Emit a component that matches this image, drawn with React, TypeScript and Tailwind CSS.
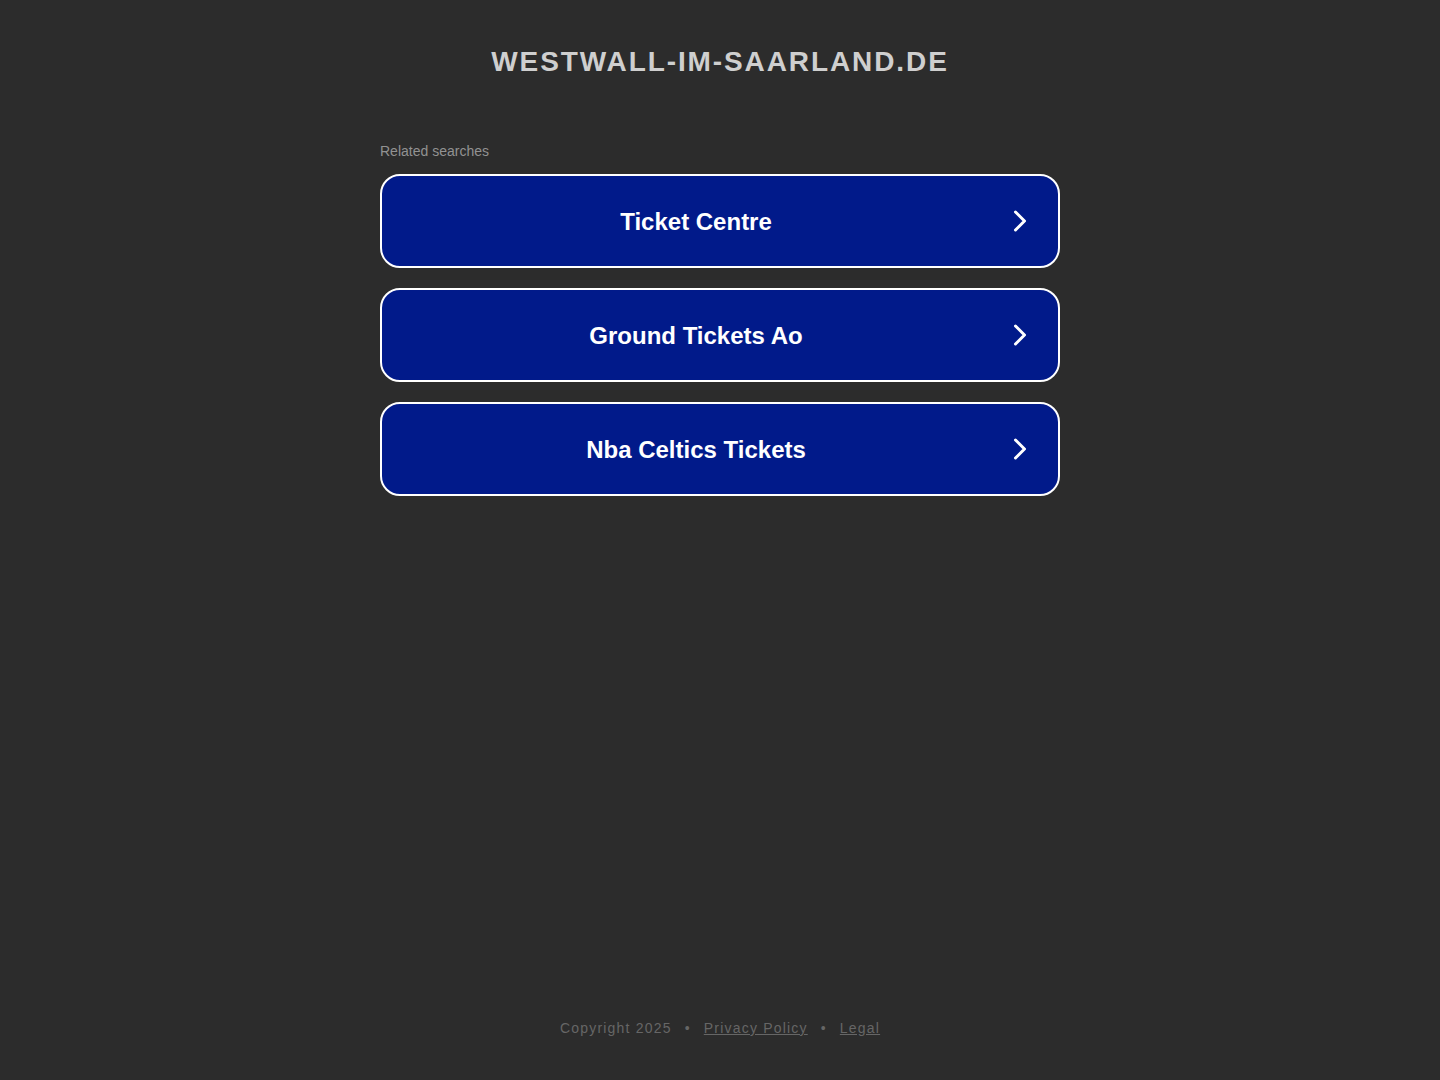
import { ChevronRight } from 'lucide-react';

const searches = ['Ticket Centre', 'Ground Tickets Ao', 'Nba Celtics Tickets'];

export default function App() {
  return (
    <div className="min-h-screen bg-[#2c2c2c] flex flex-col font-['Liberation_Sans',Arial,sans-serif]">
      <header className="pt-[44px] text-center">
        <h1 className="text-[28px] leading-9 font-bold tracking-[1.9px] text-[#cfcfcf]">WESTWALL-IM-SAARLAND.DE</h1>
      </header>

      <main className="w-[680px] mx-auto mt-[63px] flex-1">
        <div className="text-sm text-[#929292] mb-[15px] leading-4">Related searches</div>
        <div className="flex flex-col gap-5">
          {searches.map((s) => (
            <a
              key={s}
              href="#"
              className="relative flex items-center justify-center h-[94px] rounded-[20px] border-2 border-white bg-[#011a8a] text-white"
            >
              <span className="text-2xl font-bold pr-12 pt-[2px]">{s}</span>
              <ChevronRight className="absolute right-[20px] w-9 h-9" strokeWidth={2} />
            </a>
          ))}
        </div>
      </main>

      <footer className="pb-[42px] text-center text-sm tracking-[1.2px] text-[#666666]">
        <span>Copyright 2025</span>
        <span className="mx-[13px]">•</span>
        <a href="#" className="underline">Privacy Policy</a>
        <span className="mx-[13px]">•</span>
        <a href="#" className="underline">Legal</a>
      </footer>
    </div>
  );
}
